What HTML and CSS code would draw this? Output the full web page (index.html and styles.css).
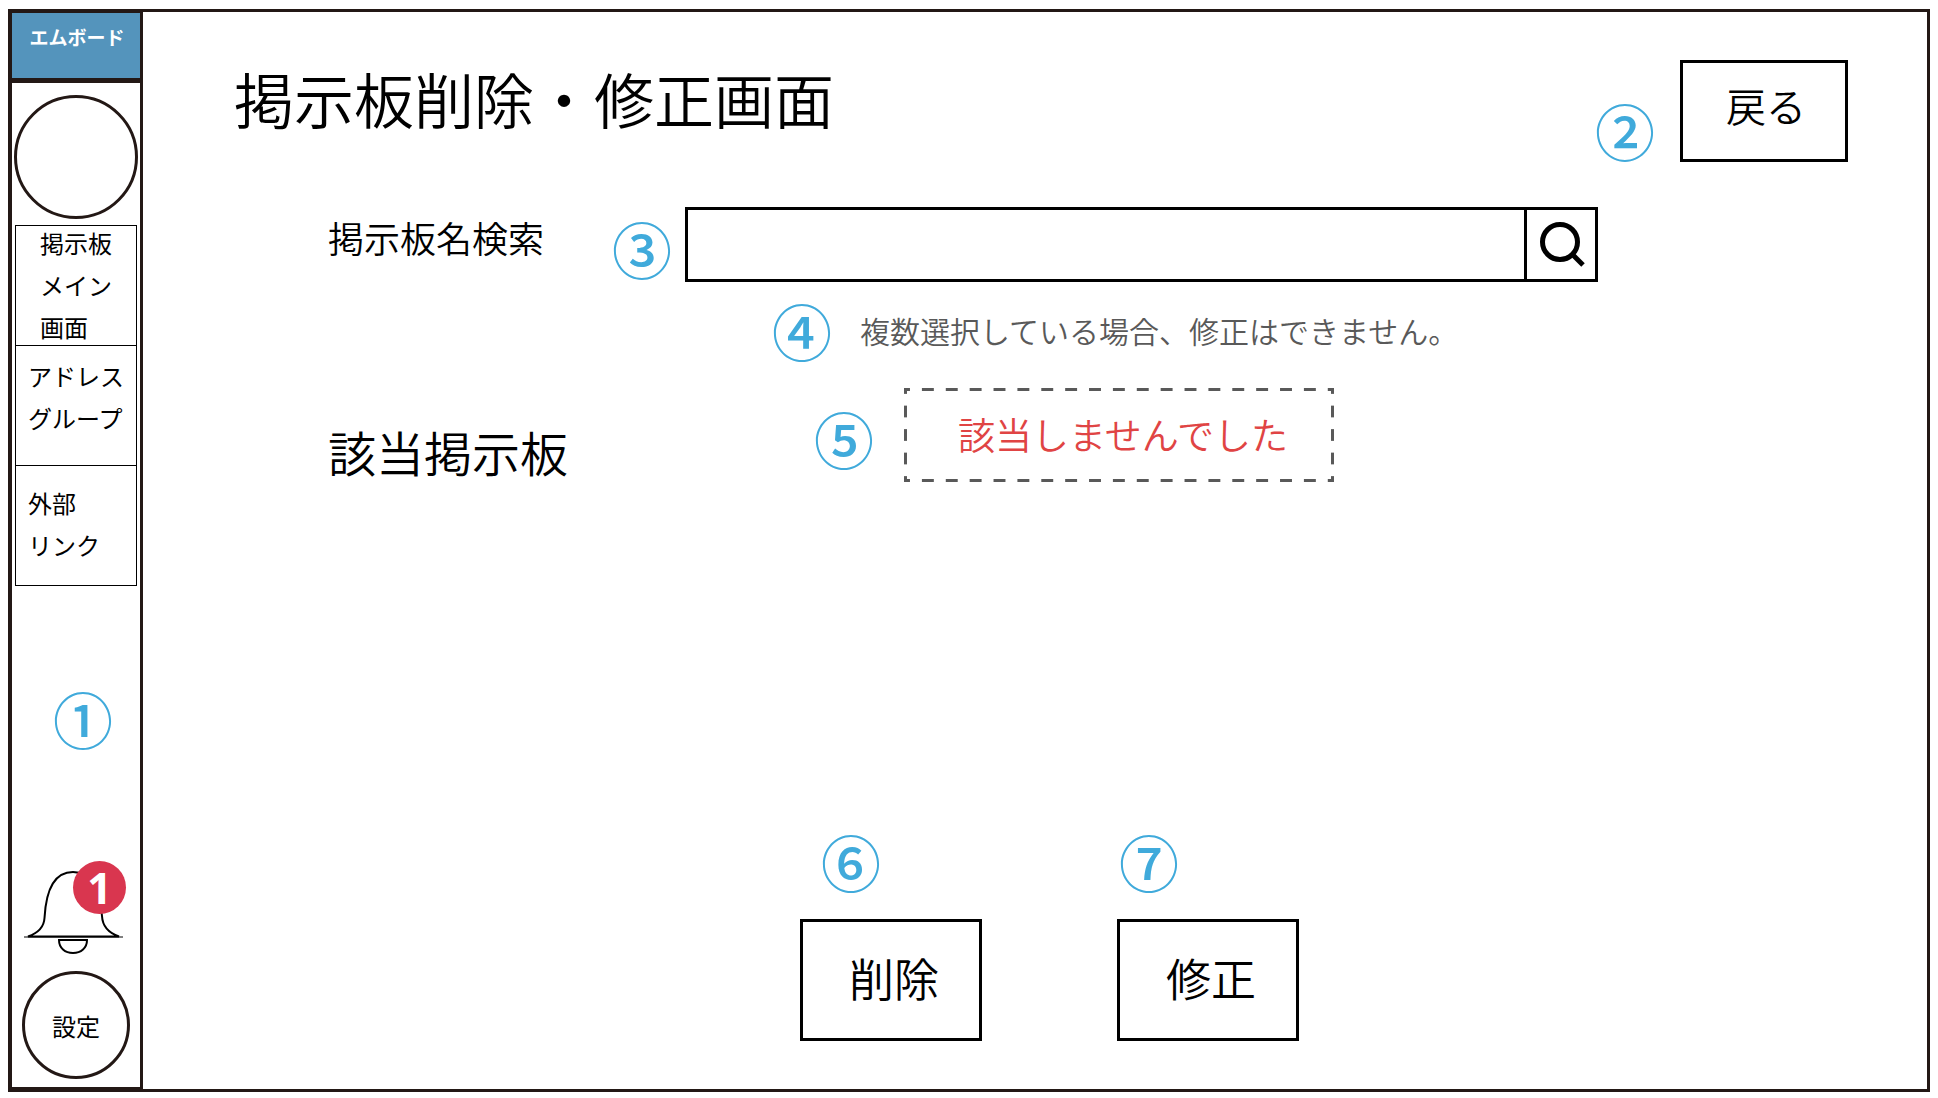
FILE: index.html
```html
<!DOCTYPE html>
<html lang="ja">
<head>
<meta charset="utf-8">
<meta name="viewport" content="width=device-width, initial-scale=1">
<title>掲示板削除・修正画面</title>
<link rel="stylesheet" href="styles.css">
</head>
<body>
<div class="frame">
  <aside class="sidebar">
    <div class="brand">エムボード</div>
    <div class="avatar"></div>
    <nav class="menu">
      <a class="menu-item menu-item-inset" href="#main">掲示板<br>メイン<br>画面</a>
      <a class="menu-item menu-item-raised" href="#address">アドレス<br>グループ</a>
      <a class="menu-item" href="#links">外部<br>リンク</a>
    </nav>
    <span class="marker marker-sidebar">①</span>
    <div class="sidebar-foot">
      <button class="bell" type="button" aria-label="通知">
        <svg width="104" height="88" viewBox="0 0 104 88" fill="none" stroke="#000" stroke-width="2">
          <path d="M6 65.500C16 62 22 56 22.500 47C24 19 32 1 51 1C70 1 78 19 80 45C80.500 56 87 62 97 65.500Z"/>
          <path d="M2 66H101" stroke-width="1"/>
          <path d="M37 69H65C65 77 59 82 51 82C43 82 37 77 37 69Z"/>
        </svg>
        <span class="badge">1</span>
      </button>
      <button class="settings" type="button">設定</button>
    </div>
  </aside>
  <main class="main">
    <header class="page-head">
      <h1 class="title">掲示板削除・修正画面</h1>
      <div class="back">
        <span class="marker marker-back">②</span>
        <button class="box-button back-button" type="button">戻る</button>
      </div>
    </header>
    <form class="search-row">
      <label class="search-label" for="board-name">掲示板名検索</label>
      <span class="marker">③</span>
      <div class="search">
        <input class="search-input" id="board-name" type="text">
        <button class="search-button" type="button" aria-label="検索">
          <svg width="48" height="48" viewBox="0 0 48 48" fill="none" stroke="#000">
            <circle cx="22" cy="21" r="17.500" stroke-width="5"/>
            <path d="M34 33L45 44" stroke-width="5"/>
          </svg>
        </button>
      </div>
    </form>
    <div class="note-row">
      <span class="marker">④</span>
      <p class="note">複数選択している場合、修正はできません。</p>
    </div>
    <section class="result-row">
      <h2 class="result-title">該当掲示板</h2>
      <span class="marker marker-result">⑤</span>
      <p class="result-empty">該当しませんでした</p>
    </section>
    <div class="actions">
      <div class="action action-delete">
        <span class="marker">⑥</span>
        <button class="box-button action-button" type="button">削除</button>
      </div>
      <div class="action action-edit">
        <span class="marker">⑦</span>
        <button class="box-button action-button" type="button">修正</button>
      </div>
    </div>
  </main>
</div>
</body>
</html>
```
FILE: styles.css
```css
* {
  box-sizing: border-box;
}

body {
  margin: 0;
  display: flex;
  min-height: 100vh;
  background: #fff;
  color: #000;
  font-family: "Noto Sans CJK JP", sans-serif;
  font-weight: 350;
}

h1, h2, p {
  margin: 0;
  font-weight: 350;
}

button, input {
  margin: 0;
  padding: 0;
  border: 0;
  border-radius: 0;
  background: none;
  color: inherit;
  font: inherit;
}

.frame {
  flex: 1;
  display: flex;
  margin: 9px 8px 6px;
  border: 3px solid #231815;
  border-left-width: 4px;
}

/* Sidebar */

.sidebar {
  flex: none;
  display: flex;
  flex-direction: column;
  align-items: center;
  width: 131px;
  border-right: 3px solid #231815;
  border-bottom: 2px solid #231815;
  font-weight: 400;
}

.brand {
  width: 100%;
  height: 71px;
  padding-left: 2px;
  border-top: 1px solid #231815;
  border-bottom: 5px solid #231815;
  background: #5494bc;
  color: #fff;
  font-size: 19px;
  font-weight: 700;
  line-height: 48px;
  text-align: center;
}

.avatar {
  width: 124px;
  height: 124px;
  margin-top: 12px;
  border: 3px solid #231815;
  border-radius: 50%;
}

.menu {
  width: 122px;
  margin-top: 6px;
  border: 1px solid #000;
  border-top: 0;
}

.menu-item {
  display: grid;
  align-content: center;
  height: 120px;
  padding: 0 0 4px 12px;
  border-top: 1px solid #000;
  color: #000;
  font-size: 24px;
  line-height: 42px;
  text-decoration: none;
  white-space: nowrap;
}

.menu-item-inset {
  padding: 0 0 2px 24px;
}

.menu-item-raised {
  padding-bottom: 18px;
}

.marker {
  flex: none;
  display: flex;
  justify-content: center;
  width: 56px;
  height: 62px;
  color: #40aadb;
  font-size: 60px;
  font-weight: 500;
  line-height: 56px;
}

.marker-sidebar {
  margin: 104px 0 0 14px;
}

.sidebar-foot {
  display: flex;
  flex-direction: column;
  gap: 12px;
  margin-top: auto;
  padding-bottom: 8px;
}

.bell {
  position: relative;
  display: block;
  width: 104px;
  height: 88px;
}

.bell svg {
  display: block;
}

.badge {
  position: absolute;
  top: -10px;
  right: 0;
  width: 53px;
  height: 53px;
  border-radius: 50%;
  background: #d9364f;
  color: #fff;
  font-family: "Noto Sans", sans-serif;
  font-size: 43px;
  font-weight: 700;
  line-height: 53px;
  text-align: center;
}

.settings {
  width: 108px;
  height: 108px;
  border: 3px solid #231815;
  border-radius: 50%;
  font-size: 24px;
}

/* Main area */

.main {
  flex: 1;
  display: flex;
  flex-direction: column;
}

.box-button {
  border: 3px solid #000;
}

.page-head {
  display: flex;
  justify-content: space-between;
  padding: 48px 79px 0 91px;
}

.title {
  font-size: 60px;
  line-height: 76px;
}

.back {
  display: flex;
  align-items: flex-end;
  gap: 27px;
}

.marker-back {
  height: 60px;
}

.back-button {
  width: 168px;
  height: 102px;
  padding: 0 0 12px 4px;
  font-size: 40px;
}

.search-row {
  display: flex;
  align-items: flex-end;
  padding: 45px 329px 0 185px;
}

.search-label {
  align-self: flex-start;
  margin-right: 70px;
  font-size: 36px;
  line-height: 60px;
}

.search {
  flex: 1;
  display: flex;
  height: 75px;
  margin-left: 15px;
  border: 3px solid #000;
}

.search-input {
  flex: 1;
  min-width: 0;
  padding: 0 16px;
  font-size: 36px;
}

.search-button {
  width: 71px;
  padding-left: 2px;
  border-left: 3px solid #000;
}

.search-button svg {
  display: block;
  margin: 0 auto;
}

.note-row {
  display: flex;
  gap: 30px;
  margin-top: 20px;
  padding-left: 631px;
}

.note {
  color: #595959;
  font-size: 30px;
  line-height: 56px;
}

.result-row {
  display: flex;
  align-items: flex-end;
  margin-top: 24px;
  padding-left: 185px;
}

.result-title {
  margin-right: 248px;
  font-size: 48px;
  line-height: 62px;
}

.marker-result {
  margin-bottom: 10px;
}

/* Long dashes, evenly fitted to each side and meeting at the corners */
.result-empty {
  width: 430px;
  height: 94px;
  margin-left: 32px;
  padding-left: 8px;
  background-image:
    linear-gradient(90deg, #595959 6px, transparent 6px calc(100% - 6px), #595959 0),
    linear-gradient(90deg, #595959 6px, transparent 6px calc(100% - 6px), #595959 0),
    linear-gradient(#595959 6px, transparent 6px calc(100% - 6px), #595959 0),
    linear-gradient(#595959 6px, transparent 6px calc(100% - 6px), #595959 0);
  background-position: left top, left bottom, left top, right top;
  background-repeat: round no-repeat, round no-repeat, no-repeat round, no-repeat round;
  background-size: 24px 3px, 24px 3px, 3px 23px, 3px 23px;
  color: #e04444;
  font-size: 37px;
  line-height: 92px;
  text-align: center;
}

.actions {
  display: flex;
  gap: 135px;
  margin-top: auto;
  padding: 0 0 48px 657px;
}

.action {
  display: flex;
  flex-direction: column;
  gap: 24px;
}

.action-delete .marker {
  margin-left: 23px;
}

.action-edit .marker {
  margin-left: 4px;
}

.action-button {
  width: 182px;
  height: 122px;
  padding: 0 0 6px 6px;
  font-size: 45px;
}
```
